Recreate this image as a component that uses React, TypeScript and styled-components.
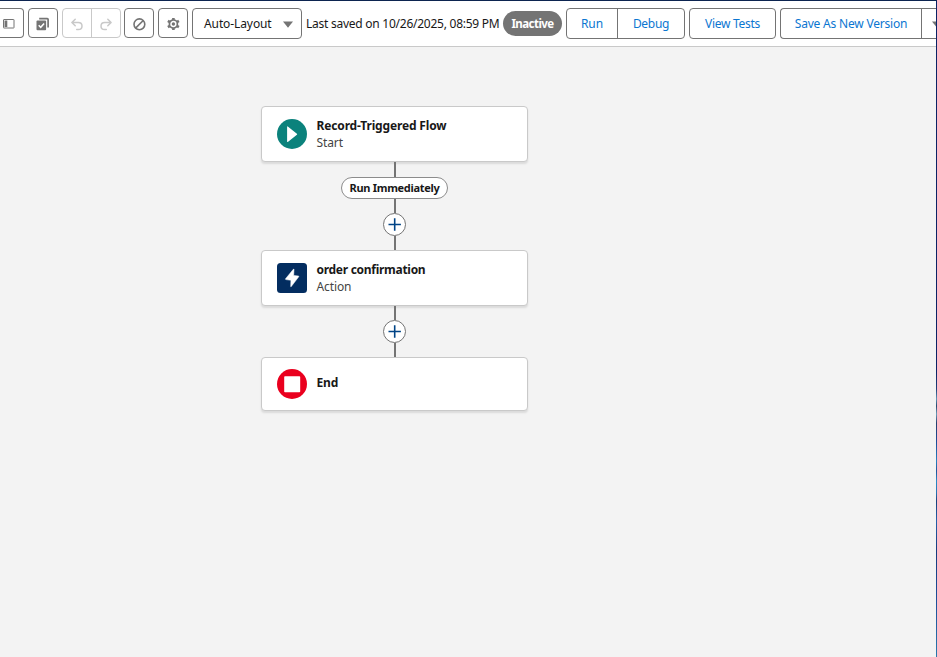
import React from "react";
import styled, { createGlobalStyle, css } from "styled-components";

const GlobalStyle = createGlobalStyle`
  * { box-sizing: border-box; }
  html, body { margin: 0; padding: 0; overflow: hidden; }
  body {
    font-family: "Noto Sans", "Open Sans", sans-serif;
    font-size: 12px;
    color: #181818;
    background: #f3f3f3;
  }
`;

const Screen = styled.div`
  display: grid;
  grid-template-columns: 936px 1px;
  width: 937px;
  height: 657px;
  border-top: 1px solid #0c2450;
`;

const Builder = styled.main`
  display: flex;
  flex-direction: column;
  min-width: 0;
  overflow: hidden;
  background: #f3f3f3;
`;

const DesktopEdge = styled.div`
  background: linear-gradient(
    #0a2265 0, #0a2265 370px, #1f3f78 388px, #5e92b4 398px, #27476f 405px,
    #6b9ab8 413px, #263f6e 422px, #1c4a96 440px, #2680c0 460px, #1f559b 470px,
    #2a8ac8 480px, #2672b3 492px, #17407c 500px, #2460aa 520px, #153a7c 550px,
    #1d4f9a 600px, #2a78ac 656px
  );
`;

const Toolbar = styled.header`
  display: flex;
  align-items: flex-start;
  flex: none;
  gap: 4px;
  height: 46px;
  padding-top: 7px;
  background: #fff;
  border-bottom: 1px solid #c9c9c9;
`;

const Group = styled.div<{ $width: number; $muted?: boolean; $bleed?: "left" | "right"; $h?: number; $after?: number }>`
  display: flex;
  flex: none;
  width: ${(p) => p.$width}px;
  height: ${(p) => p.$h ?? 31}px;
  margin-right: ${(p) => p.$after ?? 0}px;
  color: #747474;
  background: #fff;
  border: 1px solid ${(p) => (p.$muted ? "#c9c9c9" : "#747474")};
  border-radius: 4px;
  ${(p) => p.$bleed === "left" && css`border-left: 0; border-radius: 0 4px 4px 0;`}
  ${(p) => p.$bleed === "right" && css`border-right: 0; border-radius: 4px 0 0 4px;`}
`;

const IconButton = styled.button<{ $muted?: boolean; $divided?: boolean; $inset?: number }>`
  display: flex;
  flex: 1;
  align-items: center;
  justify-content: center;
  padding: 2px ${(p) => p.$inset ?? 0}px 0 0;
  border: 0;
  border-left: ${(p) => (p.$divided ? "1px solid #c9c9c9" : "0")};
  background: none;
  color: ${(p) => (p.$muted ? "#c9c9c9" : "#747474")};
  svg { display: block; }
`;

const TextButton = styled.button<{ $width: number; $divided?: boolean; $track?: number }>`
  width: ${(p) => p.$width}px;
  flex: none;
  padding: 0;
  border: 0;
  border-left: ${(p) => (p.$divided ? "1px solid #747474" : "0")};
  background: none;
  color: #0b76d1;
  font: 12px/29px "Noto Sans", sans-serif;
  letter-spacing: ${(p) => p.$track ?? 0}px;
  white-space: nowrap;
`;

const LayoutSelect = styled.div`
  display: flex;
  align-items: center;
  justify-content: space-between;
  width: 100%;
  padding: 0 8px 0 11px;
  font-size: 12px;
  line-height: 29px;
  letter-spacing: -0.1px;
  color: #181818;
  svg { margin-top: 2px; }
`;

const CaretSlot = styled.span`
  display: flex;
  flex: 1;
  align-items: center;
  padding: 2px 0 0 10px;
  border-left: 1px solid #747474;
  overflow: hidden;
  svg { flex: none; }
`;

const SavedText = styled.span`
  flex: none;
  width: 193px;
  line-height: 31px;
  font-size: 12px;
  letter-spacing: -0.25px;
  white-space: nowrap;
`;

const StatusPill = styled.span`
  flex: none;
  width: 59px;
  height: 25px;
  margin-top: 3px;
  border-radius: 13px;
  background: #747474;
  color: #fff;
  font-size: 11.5px;
  font-weight: 700;
  line-height: 25px;
  text-align: center;
  letter-spacing: -0.55px;
`;

const Canvas = styled.section`
  display: flex;
  flex: 1;
  flex-direction: column;
  align-items: center;
  width: 267px;
  margin-left: 261px;
  padding-top: 59px;
`;

const Card = styled.article<{ $height: number }>`
  display: flex;
  flex: none;
  align-items: center;
  gap: 9.5px;
  width: 267px;
  height: ${(p) => p.$height}px;
  padding-left: 15px;
  border: 1px solid #c9c9c9;
  border-radius: 4px;
  background: #fff;
  box-shadow: 0 2px 2px rgba(0, 0, 0, 0.1);
  svg { display: block; flex: none; }
`;

const CardText = styled.div<{ $lift?: number }>`
  display: flex;
  flex-direction: column;
  padding-bottom: ${(p) => p.$lift ?? 0}px;
  line-height: 17px;
`;

const CardTitle = styled.strong<{ $track?: number }>`
  font-size: 12px;
  font-weight: 700;
  letter-spacing: ${(p) => p.$track ?? 0}px;
`;

const CardKind = styled.span`
  color: #444;
  font-size: 12px;
  letter-spacing: -0.1px;
`;

const Connector = styled.div<{ $height: number }>`
  flex: none;
  width: 2px;
  height: ${(p) => p.$height}px;
  background: #747474;
`;

const PathLabel = styled.span`
  flex: none;
  width: 107px;
  height: 22px;
  border: 1px solid #8c8c8c;
  border-radius: 11px;
  background: #fff;
  font-size: 11px;
  font-weight: 700;
  line-height: 20px;
  letter-spacing: -0.3px;
  text-align: center;
  white-space: nowrap;
`;

const AddButton = styled.button`
  display: flex;
  flex: none;
  align-items: center;
  justify-content: center;
  width: 23px;
  height: 23px;
  padding: 0;
  border: 1px solid #747474;
  border-radius: 50%;
  background: #fff;
`;

const Caret = () => (
  <svg width="10" height="7" viewBox="0 0 10 7"><path d="M0 .4h10L5 6.7z" fill="#747474" /></svg>
);

const PanelIcon = () => (
  <svg width="12" height="10" viewBox="0 0 12 10" fill="none" stroke="currentColor">
    <rect x=".5" y=".5" width="10.5" height="8.5" rx=".4" /><path d="M2.9 1.5v6.5" strokeWidth="2.8" />
  </svg>
);

const SelectIcon = () => (
  <svg width="14" height="14" viewBox="0 0 14 14">
    <path d="M3.2 1.7h8.1q.8 0 .8.8v7.9" fill="none" stroke="currentColor" strokeWidth="1.7" />
    <rect x=".5" y="3.6" width="9.6" height="9.6" rx="1" fill="currentColor" />
    <path d="M2.7 8.3l2 2 3.4-3.8" fill="none" stroke="#fff" strokeWidth="1.5" />
  </svg>
);

const UndoIcon = () => (
  <svg width="13" height="13" viewBox="0 0 13 13" fill="none" stroke="currentColor" strokeWidth="1.5" strokeLinecap="round" strokeLinejoin="round">
    <path d="M4.2 1.2L.9 4.5l3.3 3.3M1.2 4.5h6.1c2.2 0 3.7 1.4 3.7 3.5s-1.5 3.6-3.7 3.6H5.7" />
  </svg>
);

const RedoIcon = () => (
  <svg width="13" height="13" viewBox="0 0 13 13" fill="none" stroke="currentColor" strokeWidth="1.5" strokeLinecap="round" strokeLinejoin="round">
    <path d="M7.8 1.2l3.3 3.3-3.3 3.3M10.8 4.5H4.7C2.5 4.5 1 5.9 1 8s1.5 3.6 3.7 3.6h1.6" />
  </svg>
);

const BanIcon = () => (
  <svg width="14" height="14" viewBox="0 0 14 14" fill="none" stroke="currentColor" strokeWidth="1.6">
    <circle cx="7.4" cy="7.3" r="5.4" /><path d="M3.6 11.1l7.6-7.6" />
  </svg>
);

const GearIcon = () => (
  <svg width="14" height="14" viewBox="0 0 14 14" fill="none" stroke="currentColor">
    <circle cx="7.4" cy="7" r="4" strokeWidth="1.7" />
    <path d="M7.4 3V.9M7.4 11v2.1M3.9 5.1L1.9 3.9M10.9 8.9l2 1.2M3.9 8.9l-2 1.2M10.9 5.1l2-1.2" strokeWidth="2.6" />
    <circle cx="7.4" cy="7" r="1.7" fill="currentColor" stroke="none" />
  </svg>
);

const PlusIcon = () => (
  <svg width="13" height="13" viewBox="0 0 13 13"><path d="M6.7.3v12.4M.5 6.5h12.4" stroke="#014486" strokeWidth="1.6" /></svg>
);

const StartIcon = () => (
  <svg width="30" height="30" viewBox="0 0 30 30">
    <circle cx="15" cy="15" r="15" fill="#0b827c" /><path d="M10.1 7.8v14.8q0 .8.7.3l9.1-7.2q.6-.5 0-1l-9.1-7.2q-.7-.5-.7.3z" fill="#fff" />
  </svg>
);

const ActionIcon = () => (
  <svg width="30" height="30" viewBox="0 0 30 30">
    <rect width="30" height="30" rx="3.5" fill="#032d60" />
    <path d="M16.3 6.3L8.6 15.7q-.5.7.3.9l5 .7-.2 6q0 .9.6.2l7.4-9.7q.5-.7-.3-.8l-4.7-.6.3-5.9q0-.9-.7-.2z" fill="#fff" stroke="#fff" strokeWidth=".5" />
  </svg>
);

const EndIcon = () => (
  <svg width="30" height="30" viewBox="0 0 30 30">
    <circle cx="15" cy="15" r="15" fill="#ea001e" /><rect x="7.2" y="7.2" width="16" height="16" rx=".8" fill="#fff" />
  </svg>
);

export default function App() {
  return (
    <>
      <GlobalStyle />
      <Screen>
        <Builder>
          <Toolbar>
            <Group $width={24} $h={30} $bleed="left">
              <IconButton $inset={5} aria-label="Toggle toolbox"><PanelIcon /></IconButton>
            </Group>
            <Group $width={30} $h={30}><IconButton aria-label="Select elements"><SelectIcon /></IconButton></Group>
            <Group $width={59} $h={30} $muted $after={-1}>
              <IconButton $muted aria-label="Undo"><UndoIcon /></IconButton>
              <IconButton $muted $divided aria-label="Redo"><RedoIcon /></IconButton>
            </Group>
            <Group $width={30} $h={30}><IconButton aria-label="Errors"><BanIcon /></IconButton></Group>
            <Group $width={30} $h={30}><IconButton aria-label="Settings"><GearIcon /></IconButton></Group>
            <Group $width={110}>
              <LayoutSelect>Auto-Layout<Caret /></LayoutSelect>
            </Group>
            <SavedText>Last saved on 10/26/2025, 08:59 PM</SavedText>
            <StatusPill>Inactive</StatusPill>
            <Group $width={119}>
              <TextButton $width={50} $track={-0.1}>Run</TextButton>
              <TextButton $width={67} $divided $track={-0.3}>Debug</TextButton>
            </Group>
            <Group $width={87}><TextButton $width={85} $track={-0.3}>View Tests</TextButton></Group>
            <Group $width={156} $bleed="right">
              <TextButton $width={140} $track={-0.2}>Save As New Version</TextButton>
              <CaretSlot><Caret /></CaretSlot>
            </Group>
          </Toolbar>
          <Canvas>
            <Card $height={56}>
              <StartIcon />
              <CardText><CardTitle $track={-0.15}>Record-Triggered Flow</CardTitle><CardKind>Start</CardKind></CardText>
            </Card>
            <Connector $height={15} />
            <PathLabel>Run Immediately</PathLabel>
            <Connector $height={14} />
            <AddButton aria-label="Add element"><PlusIcon /></AddButton>
            <Connector $height={14} />
            <Card $height={56}>
              <ActionIcon />
              <CardText><CardTitle $track={-0.28}>order confirmation</CardTitle><CardKind>Action</CardKind></CardText>
            </Card>
            <Connector $height={14} />
            <AddButton aria-label="Add element"><PlusIcon /></AddButton>
            <Connector $height={14} />
            <Card $height={54}>
              <EndIcon />
              <CardText $lift={3}><CardTitle $track={-0.1}>End</CardTitle></CardText>
            </Card>
          </Canvas>
        </Builder>
        <DesktopEdge />
      </Screen>
    </>
  );
}
